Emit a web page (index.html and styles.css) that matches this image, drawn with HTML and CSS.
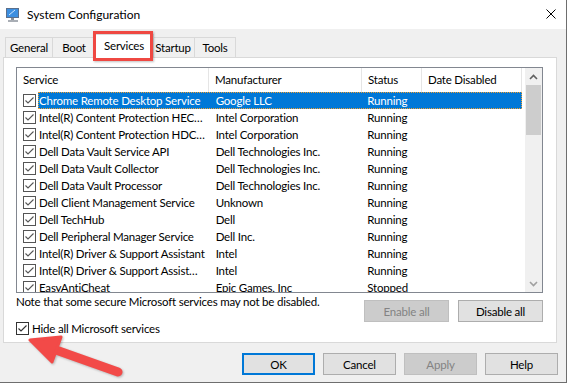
FILE: index.html
```html
<!DOCTYPE html>
<html lang="en">
<head>
    <meta charset="UTF-8">
    <title>System Configuration</title>
    <link rel="stylesheet" href="styles.css">
</head>
<body>
    <div class="window">
        <div class="titlebar">
            <svg class="app-icon" width="16" height="16" viewBox="0 0 16 16">
                <rect x="1" y="1" width="13" height="10" fill="#5a6f8c"/>
                <rect x="2" y="2" width="11" height="8" fill="#3d8fe0"/>
                <path d="M4 8 L10 3" stroke="#cfe6ff" stroke-width="1"/>
                <rect x="6" y="11" width="3" height="2" fill="#8a8f96"/>
                <rect x="3" y="13" width="10" height="2" fill="#a9aeb5"/>
            </svg>
            <span class="title">System Configuration</span>
            <svg class="close" width="10" height="10" viewBox="0 0 10 10">
                <path d="M0.5 0.5 L9.5 9.5 M9.5 0.5 L0.5 9.5" stroke="#000" stroke-width="1"/>
            </svg>
        </div>

        <div class="tabs">
            <div class="tab" style="width:48px">General</div>
            <div class="tab" style="width:44px">Boot</div>
            <div class="tab active" style="width:60px">Services</div>
            <div class="tab" style="width:44px">Startup</div>
            <div class="tab" style="width:42px">Tools</div>
        </div>

        <div class="panel">
            <div class="listbox">
                <div class="list-main">
                    <div class="head">
                        <div class="hcell" style="width:192px">Service</div>
                        <div class="hcell" style="width:153px">Manufacturer</div>
                        <div class="hcell" style="width:60px">Status</div>
                        <div class="hcell" style="width:100px">Date Disabled</div>
                    </div>
                    <div id="rows"></div>
                </div>
                <div class="scrollbar">
                    <div class="sb-btn">
                        <svg width="9" height="6" viewBox="0 0 9 6"><path d="M1 5 L4.5 1.5 L8 5" fill="none" stroke="#606060" stroke-width="1.6"/></svg>
                    </div>
                    <div class="sb-track"><div class="sb-thumb"></div></div>
                    <div class="sb-btn">
                        <svg width="9" height="6" viewBox="0 0 9 6"><path d="M1 1 L4.5 4.5 L8 1" fill="none" stroke="#a0a0a0" stroke-width="1.6"/></svg>
                    </div>
                </div>
            </div>

            <div class="actions">
                <div class="note">Note that some secure Microsoft services may not be disabled.</div>
                <button class="btn disabled">Enable all</button>
                <button class="btn">Disable all</button>
            </div>

            <label class="hide">
                <span class="box dark">
                    <svg width="11" height="11" viewBox="0 0 11 11"><path d="M1.5 5.5 L4 8 L9.5 2.5" fill="none" stroke="#333" stroke-width="1.2"/></svg>
                </span>
                Hide all Microsoft services
            </label>
        </div>

        <div class="footer">
            <button class="btn default">OK</button>
            <button class="btn">Cancel</button>
            <button class="btn disabled">Apply</button>
            <button class="btn">Help</button>
        </div>

        <div class="highlight"></div>
        <svg class="arrow" width="140" height="60" viewBox="0 320 140 60">
            <g fill="#f24a48" stroke="#f24a48">
                <line x1="56" y1="350" x2="118" y2="372" stroke-width="9" stroke-linecap="round"/>
                <polygon points="30,340 61,337 52,362" stroke-width="3" stroke-linejoin="round"/>
            </g>
        </svg>
    </div>

    <script>
        var services = [
            ["Chrome Remote Desktop Service", "Google LLC", "Running"],
            ["Intel(R) Content Protection HEC\u2026", "Intel Corporation", "Running"],
            ["Intel(R) Content Protection HDC\u2026", "Intel Corporation", "Running"],
            ["Dell Data Vault Service API", "Dell Technologies Inc.", "Running"],
            ["Dell Data Vault Collector", "Dell Technologies Inc.", "Running"],
            ["Dell Data Vault Processor", "Dell Technologies Inc.", "Running"],
            ["Dell Client Management Service", "Unknown", "Running"],
            ["Dell TechHub", "Dell", "Running"],
            ["Dell Peripheral Manager Service", "Dell Inc.", "Running"],
            ["Intel(R) Driver & Support Assistant", "Intel", "Running"],
            ["Intel(R) Driver & Support Assist\u2026", "Intel", "Running"],
            ["EasyAntiCheat", "Epic Games, Inc", "Stopped"]
        ];

        var check = '<svg width="11" height="11" viewBox="0 0 11 11"><path d="M1.5 5.5 L4 8 L9.5 2.5" fill="none" stroke="#555" stroke-width="1.1"/></svg>';
        var html = "";
        for (var i = 0; i < services.length; i++) {
            var s = services[i];
            html += "<div class='row'>";
            html += "<div class='chk'><span class='box'>" + check + "</span></div>";
            html += "<div class='cells" + (i === 0 ? " selected" : "") + "'>";
            html += "<div class='cell c1'>" + s[0].replace("&", "&amp;") + "</div>";
            html += "<div class='cell c2'>" + s[1] + "</div>";
            html += "<div class='cell c3'>" + s[2] + "</div>";
            html += "<div class='cell c4'></div>";
            html += "</div></div>";
        }
        document.getElementById("rows").innerHTML = html;
    </script>
</body>
</html>
```

FILE: styles.css
```css
body {
    margin: 0;
    background: #fff;
    font-family: Lato, "Liberation Sans", sans-serif;
    font-size: 11.5px;
    letter-spacing: -0.2px;
    color: #000;
}

.window {
    position: relative;
    width: 566px;
    height: 382px;
    background: #f0f0f0;
    border-right: 1px solid #6e6e6e;
    border-bottom: 1px solid #6e6e6e;
    overflow: hidden;
}

.titlebar {
    height: 29px;
    background: #fff;
    display: flex;
    align-items: center;
    padding-left: 5px;
}

.app-icon {
    margin-top: 1px;
}

.title {
    margin-left: 6px;
    font-size: 12px;
    letter-spacing: 0;
}

.close {
    margin-left: auto;
    margin-right: 10px;
    margin-top: -2px;
}

.tabs {
    display: flex;
    align-items: flex-end;
    height: 28px;
    padding-left: 5px;
    position: relative;
    z-index: 1;
}

.tab {
    box-sizing: border-box;
    height: 20px;
    border: 1px solid #d9d9d9;
    border-bottom: none;
    margin-left: -1px;
    text-align: center;
    line-height: 19px;
    background: #f0f0f0;
    white-space: nowrap;
}

.tab:first-child {
    margin-left: 0;
}

.tab.active {
    height: 24px;
    margin-bottom: -1px;
    margin-left: -2px;
    margin-right: -2px;
    background: #fff;
    line-height: 21px;
    position: relative;
}

.panel {
    box-sizing: border-box;
    margin-left: 3px;
    width: 554px;
    height: 286px;
    background: #fff;
    border: 1px solid #d9d9d9;
    padding: 9px 0 0 12px;
}

.listbox {
    box-sizing: border-box;
    width: 527px;
    height: 226px;
    border: 1px solid #828790;
    display: flex;
    overflow: hidden;
}

.list-main {
    width: 508px;
    overflow: hidden;
}

.head {
    display: flex;
    height: 24px;
}

.hcell {
    box-sizing: border-box;
    padding-left: 6px;
    line-height: 24px;
    border-right: 1px solid #e5e5e5;
    white-space: nowrap;
}

.row {
    display: flex;
    height: 17px;
}

.chk {
    width: 21px;
    flex: none;
    padding-left: 6px;
    box-sizing: border-box;
    padding-top: 2px;
}

.box {
    display: block;
    box-sizing: border-box;
    width: 13px;
    height: 13px;
    border: 1px solid #555;
    background: #fff;
    flex: none;
}

.box svg {
    display: block;
}

.box.dark {
    border-color: #333;
}

.cells {
    display: flex;
    width: 484px;
    height: 17px;
    box-sizing: border-box;
    border: 1px solid transparent;
}

.cells.selected {
    background: #0078d7;
    color: #fff;
    border: 1px dotted #f0a030;
}

.cell {
    box-sizing: border-box;
    white-space: nowrap;
    overflow: hidden;
    line-height: 15px;
}

.c1 { width: 170px; padding-left: 0; }
.c2 { width: 153px; padding-left: 7px; }
.c3 { width: 60px; padding-left: 6px; }
.c4 { width: 100px; }

.scrollbar {
    width: 17px;
    margin-left: auto;
    background: #f0f0f0;
    display: flex;
    flex-direction: column;
}

.sb-btn {
    height: 17px;
    display: flex;
    align-items: center;
    justify-content: center;
}

.sb-track {
    flex: 1;
    padding: 0 1px;
}

.sb-thumb {
    height: 50px;
    background: #cdcdcd;
}

.actions {
    display: flex;
    align-items: flex-start;
    margin-top: 7px;
    width: 527px;
}

.note {
    margin-top: -5px;
    margin-right: auto;
    white-space: nowrap;
}

.btn {
    box-sizing: border-box;
    width: 85px;
    height: 22px;
    margin: 0;
    padding: 0;
    background: #e1e1e1;
    border: 1px solid #adadad;
    font-family: inherit;
    font-size: 11.5px;
    letter-spacing: -0.2px;
    color: #000;
}

.actions .btn + .btn {
    margin-left: 9px;
}

.btn.disabled {
    background: #cccccc;
    border-color: #bfbfbf;
    color: #838383;
}

.btn.default {
    border: 2px solid #0078d7;
}

.hide {
    display: flex;
    align-items: center;
    height: 13px;
    gap: 3px;
}

.footer {
    display: flex;
    justify-content: flex-end;
    gap: 8px;
    margin-top: 10px;
    padding-right: 8px;
}

.footer .btn {
    width: 73px;
}

.highlight {
    position: absolute;
    left: 93px;
    top: 31px;
    width: 60px;
    height: 30px;
    box-sizing: border-box;
    border: 3px solid #ef4842;
    box-shadow: 1px 1px 2px rgba(0, 0, 0, 0.25);
    z-index: 2;
}

.arrow {
    position: absolute;
    left: 0;
    top: 320px;
    filter: drop-shadow(1px 1px 1px rgba(0, 0, 0, 0.25));
}
```
